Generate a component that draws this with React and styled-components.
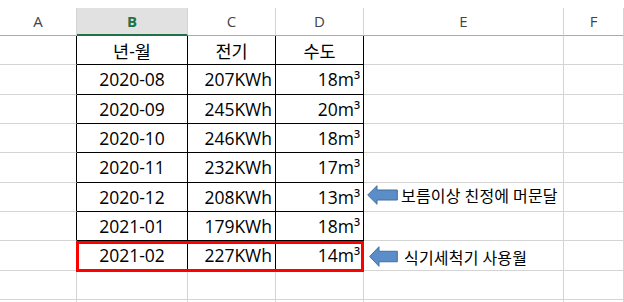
import React from "react";
import styled, { createGlobalStyle } from "styled-components";

const Global = createGlobalStyle`
  html, body { margin: 0; padding: 0; background: #fff; }
  body { overflow: hidden; }
`;

const Sheet = styled.div`
  position: relative;
  width: 624px;
  height: 302px;
  padding-top: 8px;
  box-sizing: border-box;
  overflow: hidden;
  font-family: "Open Sans", "Noto Sans CJK KR", sans-serif;
`;

const Grid = styled.div`
  display: grid;
  grid-template-columns: 77px 111px 88px 88px 200px 1fr;
  grid-template-rows: 28px;
  grid-auto-rows: 29.33px;
`;

const ColHead = styled.div`
  display: flex;
  align-items: center;
  justify-content: center;
  box-sizing: border-box;
  border-right: 1px solid #d4d4d4;
  border-bottom: ${(p) => (p.$selected ? "2px solid #217346" : "1px solid #ababab")};
  background: ${(p) => (p.$selected ? "#e1e1e1" : "#fff")};
  color: ${(p) => (p.$selected ? "#217346" : "#444")};
  font-weight: ${(p) => (p.$selected ? 700 : 400)};
  font-size: 15px;
  padding-bottom: 1px;
`;

const Cell = styled.div`
  display: flex;
  align-items: center;
  justify-content: ${(p) =>
    p.$align === "right" ? "flex-end" : p.$align === "center" ? "center" : "flex-start"};
  padding: 0 3px;
  box-sizing: border-box;
  border-right: 1px solid ${(p) => (p.$rightDark ? "#000" : "#d4d4d4")};
  border-bottom: 1px solid ${(p) => (p.$bottomDark ? "#000" : "#d4d4d4")};
  font-size: 17.5px;
  color: #000;
  white-space: nowrap;
  overflow: hidden;
`;

const Highlight = styled.div`
  position: absolute;
  left: 76px;
  top: 241px;
  width: 288px;
  height: 31px;
  box-sizing: border-box;
  border: 3px solid #ff0000;
  pointer-events: none;
`;

const Callout = styled.div`
  position: absolute;
  left: ${(p) => p.$x}px;
  top: ${(p) => p.$y}px;
  display: flex;
  align-items: center;
  gap: ${(p) => p.$gap}px;
`;

const Label = styled.span`
  font-family: "Noto Sans CJK KR", sans-serif;
  font-size: 16px;
  letter-spacing: 0.2px;
  color: #000;
  white-space: nowrap;
  line-height: 20px;
`;

const Arrow = ({ w, h }) => {
  const mid = h / 2;
  const head = 10;
  const s1 = h * 0.25;
  const s2 = h * 0.75;
  return (
    <svg width={w} height={h} viewBox={`0 0 ${w} ${h}`}>
      <path
        d={`M0.7 ${mid} L${head} 0.7 L${head} ${s1} L${w - 0.7} ${s1} L${w - 0.7} ${s2} L${head} ${s2} L${head} ${h - 0.7} Z`}
        fill="#5b8dc9"
        stroke="#41719c"
        strokeWidth="1"
      />
    </svg>
  );
};

const columns = ["A", "B", "C", "D", "E", "F"];

const rows = [
  ["년-월", "전기", "수도", true],
  ["2020-08", "207KWh", "18m³"],
  ["2020-09", "245KWh", "20m³"],
  ["2020-10", "246KWh", "18m³"],
  ["2020-11", "232KWh", "17m³"],
  ["2020-12", "208KWh", "13m³"],
  ["2021-01", "179KWh", "18m³"],
  ["2021-02", "227KWh", "14m³"],
];

export default function App() {
  return (
    <>
      <Global />
      <Sheet>
        <Grid>
          {columns.map((c) => (
            <ColHead key={c} $selected={c === "B"}>
              {c}
            </ColHead>
          ))}
          {rows.map(([b, c, d, isHead], i) => (
            <React.Fragment key={i}>
              <Cell $rightDark />
              <Cell $align="center" $rightDark $bottomDark>
                {b}
              </Cell>
              <Cell $align={isHead ? "center" : "right"} $rightDark $bottomDark>
                {c}
              </Cell>
              <Cell $align={isHead ? "center" : "right"} $rightDark $bottomDark>
                {d}
              </Cell>
              <Cell />
              <Cell />
            </React.Fragment>
          ))}
          {[0, 1].map((r) =>
            columns.map((c) => <Cell key={`e${r}${c}`} />)
          )}
        </Grid>
        <Highlight />
        <Callout $x={367} $y={185} $gap={3}>
          <Arrow w={31} h={20} />
          <Label>보름이상 친정에 머문달</Label>
        </Callout>
        <Callout $x={369} $y={246} $gap={6}>
          <Arrow w={29} h={21} />
          <Label>식기세척기 사용월</Label>
        </Callout>
      </Sheet>
    </>
  );
}
